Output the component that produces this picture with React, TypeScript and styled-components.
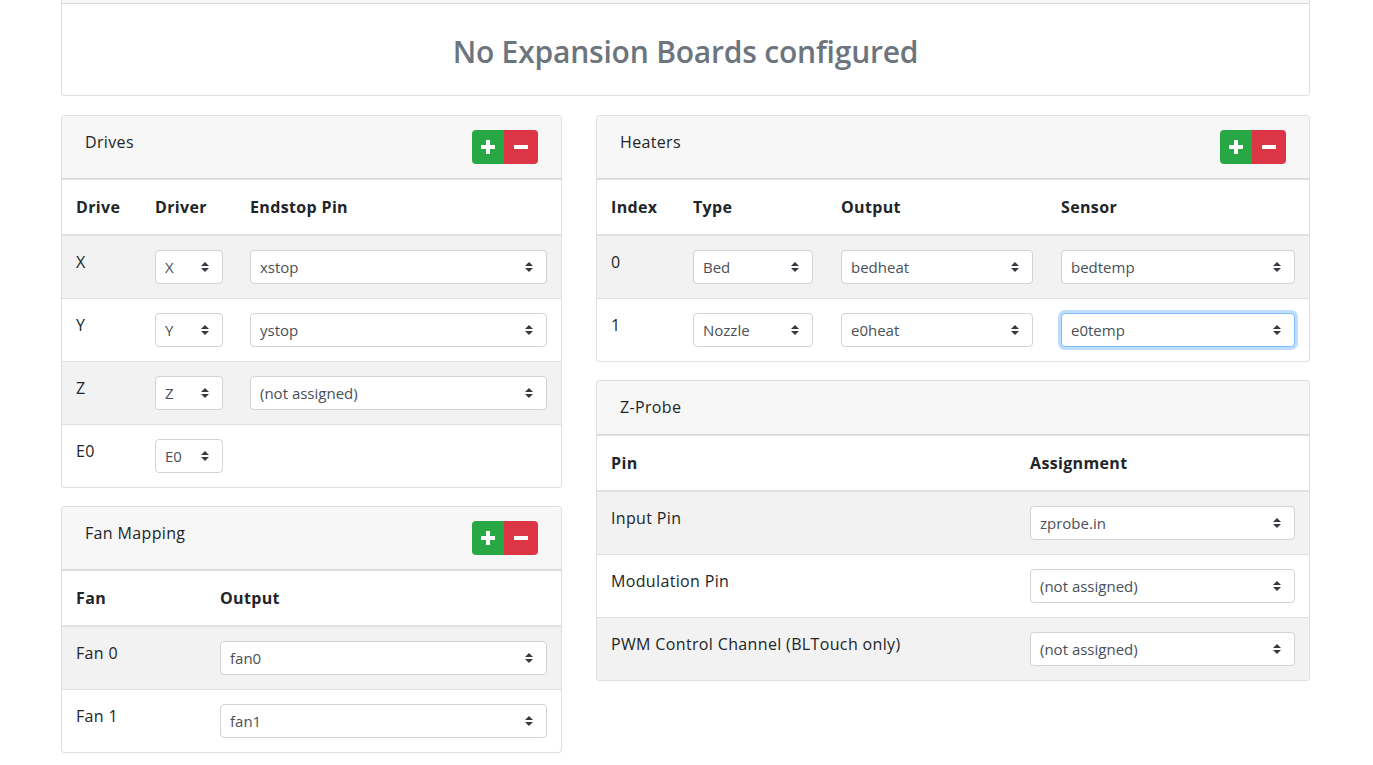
import React from "react";
import styled, { createGlobalStyle, css } from "styled-components";

const GlobalStyle = createGlobalStyle`
  html, body { margin: 0; padding: 0; background: #fff; }
  body {
    font-family: "Open Sans", "Noto Sans", "Liberation Sans", sans-serif;
    font-size: 16px;
    line-height: 1.5;
    letter-spacing: 0.35px;
    color: #212529;
  }
  * { box-sizing: border-box; }
`;

const Page = styled.div`
  padding-left: 61px;
  width: 1310px;
`;

const Card = styled.div<{ $noTop?: boolean }>`
  border: 1px solid rgba(0, 0, 0, 0.125);
  border-radius: 4px;
  background: #fff;
  overflow: hidden;
  ${(p) =>
    p.$noTop &&
    css`
      border-top: none;
      border-top-left-radius: 0;
      border-top-right-radius: 0;
    `}
`;

const HeaderSliver = styled.div`
  height: 4px;
  background: #f7f7f7;
  border-bottom: 1px solid rgba(0, 0, 0, 0.125);
`;

const NoticeBody = styled.div`
  padding: 30px 20px 25px;
  text-align: center;
`;

const NoticeTitle = styled.h2`
  margin: 0;
  font-size: 30px;
  font-weight: 600;
  line-height: 1.2;
  letter-spacing: -0.2px;
  color: #6c757d;
`;

const Columns = styled.div`
  display: grid;
  grid-template-columns: 501px 714px;
  column-gap: 34px;
  margin-top: 19px;
  align-items: start;
`;

const Column = styled.div`
  display: flex;
  flex-direction: column;
  gap: 18px;
`;

const CardHeader = styled.div`
  display: flex;
  justify-content: space-between;
  align-items: flex-start;
  padding: 14px 23px;
  min-height: 54px;
  background: #f7f7f7;
  border-bottom: 1px solid rgba(0, 0, 0, 0.125);
`;

const CardTitle = styled.span`
  font-size: 16px;
  line-height: 24px;
`;

const BtnGroup = styled.div`
  display: flex;
  height: 34px;
`;

const Btn = styled.button<{ $kind: "add" | "remove" }>`
  border: none;
  padding: 0;
  margin: 0;
  height: 34px;
  display: flex;
  align-items: center;
  justify-content: center;
  cursor: pointer;
  ${(p) =>
    p.$kind === "add"
      ? css`
          width: 32px;
          background: #28a745;
          border-radius: 4px 0 0 4px;
        `
      : css`
          width: 34px;
          background: #dc3545;
          border-radius: 0 4px 4px 0;
        `}
`;

const Table = styled.table`
  width: 100%;
  border-collapse: collapse;
  table-layout: fixed;
`;

const Th = styled.th`
  text-align: left;
  font-weight: 700;
  padding: 15px 14px;
  line-height: 24px;
  vertical-align: bottom;
  border-top: 1px solid #dee2e6;
  border-bottom: 2px solid #dee2e6;
`;

const Row = styled.tr`
  &:nth-child(odd) {
    background: #f2f2f2;
  }
`;

const Td = styled.td`
  padding: 14px;
  line-height: 24px;
  vertical-align: top;
  border-top: 1px solid #dee2e6;
  height: 62px;
`;

const SelectWrap = styled.div<{ $w?: number }>`
  position: relative;
  width: ${(p) => (p.$w ? `${p.$w}px` : "100%")};
`;

const Select = styled.select<{ $focus?: boolean }>`
  appearance: none;
  -webkit-appearance: none;
  display: block;
  width: 100%;
  height: 34px;
  padding: 0 28px 0 9px;
  font-family: "Open Sans", "Noto Sans", "Liberation Sans", sans-serif;
  font-size: 15px;
  letter-spacing: 0;
  color: #495057;
  background: #fff;
  border: 1px solid #ced4da;
  border-radius: 4px;
  outline: none;
  ${(p) =>
    p.$focus &&
    css`
      border-color: #80bdff;
      box-shadow: 0 0 0 3px rgba(0, 123, 255, 0.25);
    `}
`;

const Arrow = styled.svg`
  position: absolute;
  right: 14px;
  top: 50%;
  margin-top: -5px;
  width: 8px;
  height: 10px;
  pointer-events: none;
`;

function Sel({ value, w, focus }: { value: string; w?: number; focus?: boolean }) {
  return (
    <SelectWrap $w={w}>
      <Select $focus={focus} defaultValue={value}>
        <option value={value}>{value}</option>
      </Select>
      <Arrow viewBox="0 0 4 5">
        <path d="M2 0L0 2h4zm0 5L0 3h4z" fill="#343a40" />
      </Arrow>
    </SelectWrap>
  );
}

function AddRemove() {
  return (
    <BtnGroup>
      <Btn $kind="add" aria-label="add">
        <svg width="14" height="14" viewBox="0 0 14 14">
          <rect x="5" y="0" width="4" height="14" fill="#fff" />
          <rect x="0" y="5" width="14" height="4" fill="#fff" />
        </svg>
      </Btn>
      <Btn $kind="remove" aria-label="remove">
        <svg width="14" height="4" viewBox="0 0 14 4">
          <rect x="0" y="0" width="14" height="4" fill="#fff" />
        </svg>
      </Btn>
    </BtnGroup>
  );
}

function Panel({
  title,
  buttons,
  cols,
  heads,
  children,
}: {
  title: string;
  buttons?: boolean;
  cols: (number | undefined)[];
  heads: string[];
  children: React.ReactNode;
}) {
  return (
    <Card>
      <CardHeader>
        <CardTitle>{title}</CardTitle>
        {buttons && <AddRemove />}
      </CardHeader>
      <Table>
        <colgroup>
          {cols.map((c, i) => (
            <col key={i} style={c ? { width: c } : undefined} />
          ))}
        </colgroup>
        <thead>
          <tr>
            {heads.map((h) => (
              <Th key={h}>{h}</Th>
            ))}
          </tr>
        </thead>
        <tbody>{children}</tbody>
      </Table>
    </Card>
  );
}

const drives = [
  { d: "X", pin: "xstop" },
  { d: "Y", pin: "ystop" },
  { d: "Z", pin: "(not assigned)" },
  { d: "E0", pin: null as string | null },
];

const heaters = [
  { i: "0", type: "Bed", out: "bedheat", sensor: "bedtemp" },
  { i: "1", type: "Nozzle", out: "e0heat", sensor: "e0temp", focus: true },
];

const probe = [
  { pin: "Input Pin", val: "zprobe.in" },
  { pin: "Modulation Pin", val: "(not assigned)" },
  { pin: "PWM Control Channel (BLTouch only)", val: "(not assigned)" },
];

const fans = [
  { f: "Fan 0", out: "fan0" },
  { f: "Fan 1", out: "fan1" },
];

export default function App() {
  return (
    <>
      <GlobalStyle />
      <Page>
        <Card $noTop>
          <HeaderSliver />
          <NoticeBody>
            <NoticeTitle>No Expansion Boards configured</NoticeTitle>
          </NoticeBody>
        </Card>
        <Columns>
          <Column>
            <Panel title="Drives" buttons cols={[79, 95, undefined]} heads={["Drive", "Driver", "Endstop Pin"]}>
              {drives.map((r) => (
                <Row key={r.d}>
                  <Td>{r.d}</Td>
                  <Td>
                    <Sel value={r.d} w={68} />
                  </Td>
                  <Td>{r.pin && <Sel value={r.pin} />}</Td>
                </Row>
              ))}
            </Panel>
            <Panel title="Fan Mapping" buttons cols={[144, undefined]} heads={["Fan", "Output"]}>
              {fans.map((r) => (
                <Row key={r.f}>
                  <Td>{r.f}</Td>
                  <Td>
                    <Sel value={r.out} />
                  </Td>
                </Row>
              ))}
            </Panel>
          </Column>
          <Column>
            <Panel
              title="Heaters"
              buttons
              cols={[82, 148, 220, undefined]}
              heads={["Index", "Type", "Output", "Sensor"]}
            >
              {heaters.map((r) => (
                <Row key={r.i}>
                  <Td>{r.i}</Td>
                  <Td>
                    <Sel value={r.type} />
                  </Td>
                  <Td>
                    <Sel value={r.out} />
                  </Td>
                  <Td>
                    <Sel value={r.sensor} focus={r.focus} />
                  </Td>
                </Row>
              ))}
            </Panel>
            <Panel title="Z-Probe" cols={[419, undefined]} heads={["Pin", "Assignment"]}>
              {probe.map((r) => (
                <Row key={r.pin}>
                  <Td>{r.pin}</Td>
                  <Td>
                    <Sel value={r.val} />
                  </Td>
                </Row>
              ))}
            </Panel>
          </Column>
        </Columns>
      </Page>
    </>
  );
}
